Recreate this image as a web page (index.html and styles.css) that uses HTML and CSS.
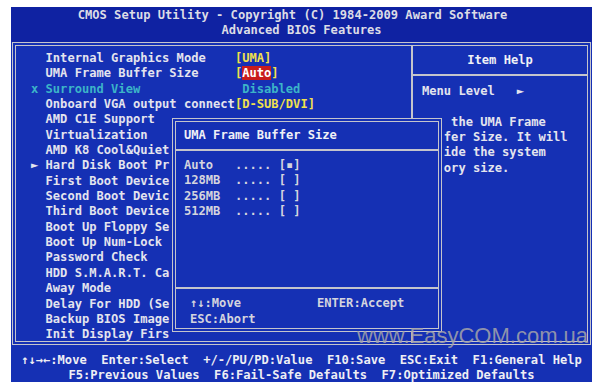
FILE: index.html
```html
<!DOCTYPE html>
<html lang="en">
<head>
    <meta charset="UTF-8">
    <title>Advanced BIOS Features</title>
    <link rel="stylesheet" href="styles.css">
</head>
<body>
    <div class="screen">
        <header class="title">
            <div class="title-line first">CMOS Setup Utility - Copyright (C) 1984-2009 Award Software</div>
            <div class="title-line">Advanced BIOS Features</div>
        </header>

        <div class="frame">
            <div class="menu">
<div class="row">  Internal Graphics Mode    <span class="val">[UMA]</span></div>
<div class="row">  UMA Frame Buffer Size     <span class="val">[<span class="sel">Auto</span>]</span></div>
<div class="row off">x Surround View              Disabled</div>
<div class="row">  Onboard VGA output connect<span class="val">[D-SUB/DVI]</span></div>
<div class="row">  AMD C1E Support</div>
<div class="row">  Virtualization</div>
<div class="row">  AMD K8 Cool&amp;Quiet</div>
<div class="row">► Hard Disk Boot Pr</div>
<div class="row">  First Boot Device</div>
<div class="row">  Second Boot Devic</div>
<div class="row">  Third Boot Device</div>
<div class="row">  Boot Up Floppy Se</div>
<div class="row">  Boot Up Num-Lock</div>
<div class="row">  Password Check</div>
<div class="row">  HDD S.M.A.R.T. Ca</div>
<div class="row">  Away Mode</div>
<div class="row">  Delay For HDD (Se</div>
<div class="row">  Backup BIOS Image</div>
<div class="row">  Init Display Firs</div>
            </div>

            <aside class="help">
                <div class="help-head">Item Help</div>
                <div class="help-body">
<div class="row">Menu Level   ►</div>
<div class="row"> </div>
<div class="row"><span class="cut4">the UMA Frame</span></div>
<div class="row"><span class="cut3">fer Size. It will</span></div>
<div class="row"><span class="cut3">ide the system</span></div>
<div class="row"><span class="cut3">ory size.</span></div>
                </div>
            </aside>

            <div class="popup">
                <div class="popup-head">UMA Frame Buffer Size</div>
                <div class="popup-list">
<div class="row">Auto   ..... [▪]</div>
<div class="row">128MB  ..... [ ]</div>
<div class="row">256MB  ..... [ ]</div>
<div class="row">512MB  ..... [ ]</div>
                </div>
                <div class="popup-keys">
                    <span>↑↓:Move</span><span>ENTER:Accept</span>
                    <span>ESC:Abort</span><span></span>
                </div>
            </div>
        </div>

        <footer class="keys">
            <div class="row">↑↓→←:Move  Enter:Select  +/-/PU/PD:Value  F10:Save  ESC:Exit  F1:General Help</div>
            <div class="row">F5:Previous Values  F6:Fail-Safe Defaults  F7:Optimized Defaults</div>
        </footer>

        <div class="watermark">www.EasyCOM.com.ua</div>
    </div>
</body>
</html>
```

FILE: styles.css
```css
/* award bios screen */
body { margin: 0; background: #fff; }

.screen {
    position: relative;
    margin: 7px 0 0 11px;
    width: 581px;
    height: 375px;
    background: #1530b4;
    color: #e4e4ee;
    font-family: "DejaVu Sans Mono", "Liberation Mono", monospace;
    font-weight: bold;
    font-size: 12.1px;
}
.row { white-space: pre; line-height: 15.35px; height: 15.35px; }

.title { height: 35px; padding-top: 1px; box-sizing: border-box; background: #0f22a2; }
.title-line { text-align: center; line-height: 14.5px; color: #dcdce6; }
.title-line.first { padding-right: 18px; }

.frame {
    position: relative;
    display: grid;
    grid-template-columns: 395px 1fr;
    height: 303px;
    margin-left: 1px;
    width: 579px;
    box-sizing: border-box;
    border: 4px double #c4c4cc;
}

.menu { padding: 5px 0 0 15px; }
.val { color: #f0e04c; }
.sel { background: #c81c1c; color: #fff; }
.off { color: #3cb4c8; }

.help { border-left: 2px solid #c4c4cc; }
.help-head {
    height: 28px;
    line-height: 28px;
    text-align: center;
    border-bottom: 2px solid #c4c4cc;
    color: #f0f0f6;
}
.help-body { padding: 8px 0 0 9px; }
.cut4 { margin-left: 4ch; }
.cut3 { margin-left: 3ch; }

.popup {
    position: absolute;
    left: 156px;
    top: 72px;
    width: 270px;
    height: 214px;
    box-sizing: border-box;
    background: #1530b4;
    border: 4px double #c4c4cc;
    display: flex;
    flex-direction: column;
}
.popup-head {
    height: 29px;
    padding: 6px 0 0 8px;
    box-sizing: border-box;
    line-height: 15.35px;
    border-bottom: 2px solid #c4c4cc;
    color: #f0f0f6;
}
.popup-list { flex: 1; padding: 7px 0 0 8px; color: #d4d4de; }
.popup-keys {
    display: grid;
    grid-template-columns: 127px 1fr;
    padding: 7px 0 0 14px;
    height: 41px;
    box-sizing: border-box;
    border-top: 2px solid #c4c4cc;
    line-height: 15.35px;
    white-space: pre;
    color: #d4d4de;
}

.keys { padding-top: 8px; text-align: center; color: #eeeef4; }

.watermark {
    position: absolute;
    left: 346px;
    top: 316px;
    font-family: "Liberation Sans", Arial, sans-serif;
    font-weight: normal;
    font-size: 22px;
    color: rgba(165, 165, 170, 0.85);
}
```
